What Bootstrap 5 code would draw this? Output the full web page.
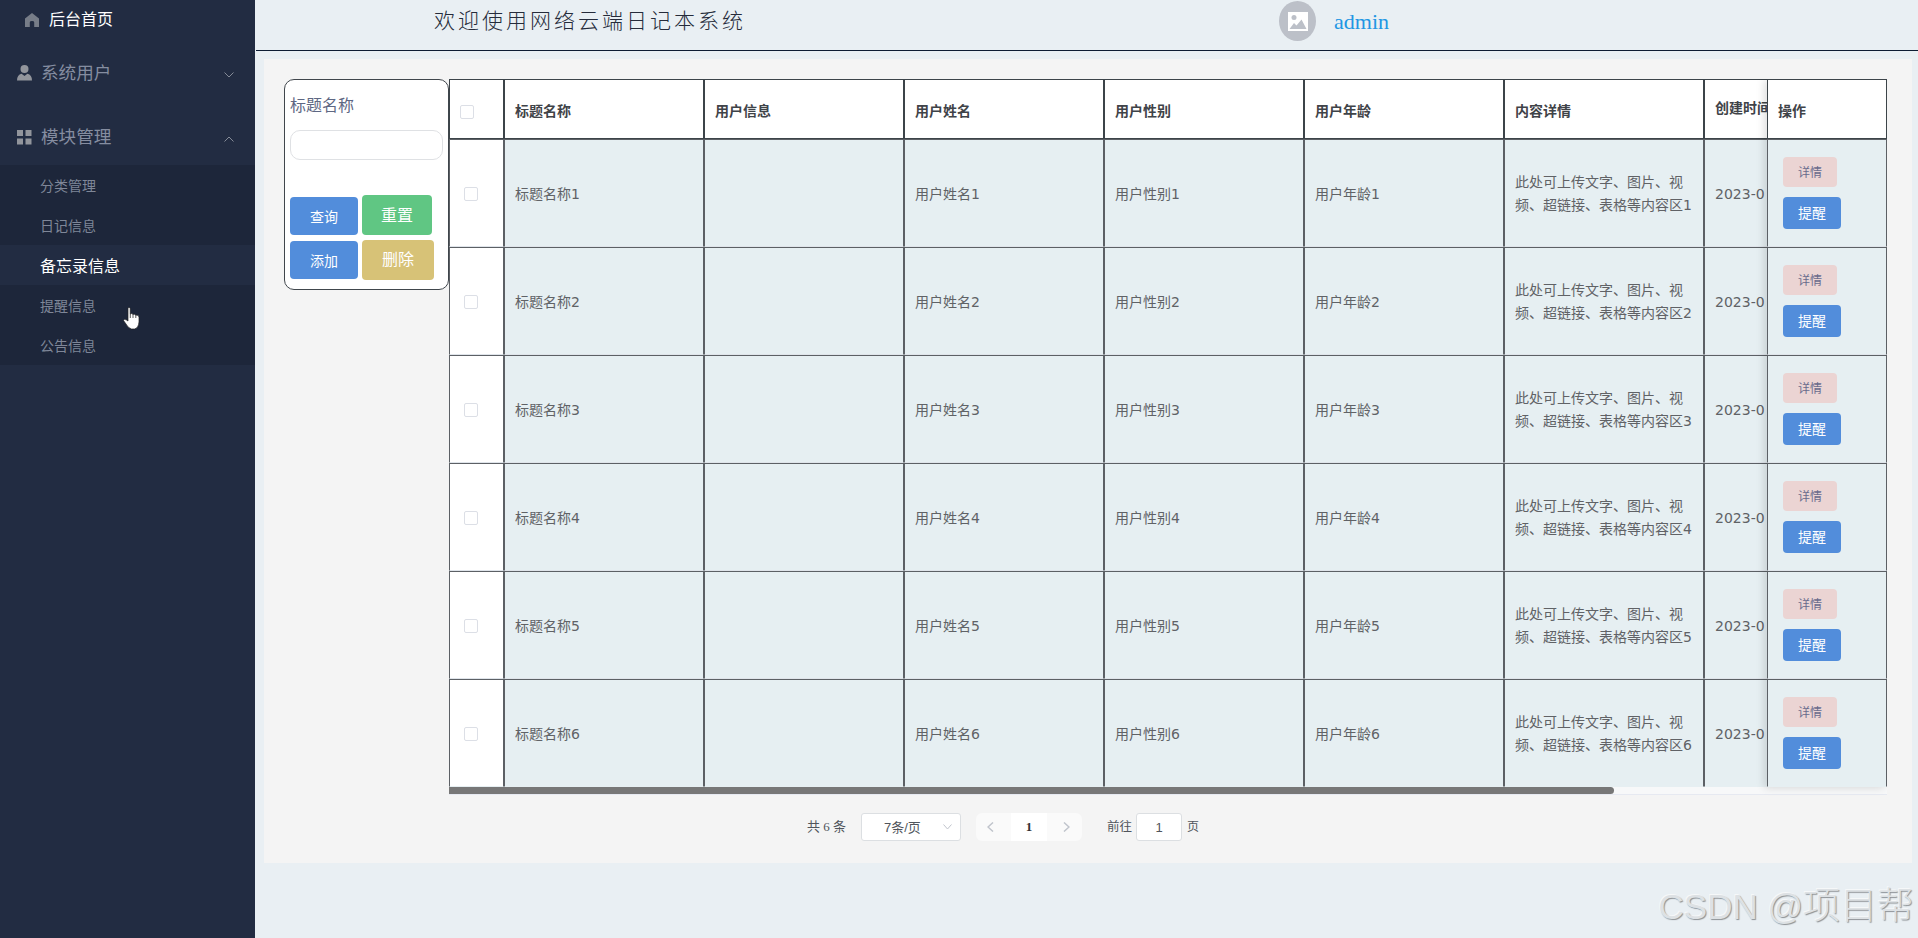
<!DOCTYPE html>
<html lang="zh-CN">
<head>
<meta charset="utf-8">
<title>网络云端日记本系统</title>
<link rel="stylesheet" href="https://cdn.jsdelivr.net/npm/bootstrap@5.3.0/dist/css/bootstrap.min.css">
<script src="https://cdn.jsdelivr.net/npm/bootstrap@5.3.0/dist/js/bootstrap.bundle.min.js"></script>
<style>
body{font-family:"DejaVu Sans","Noto Sans CJK SC",sans-serif;background:#e9eff3;height:938px;font-size:14px;color:#606266}
.side{width:255px;background:#222c42;color:#858da0;flex:none}
.side a{color:inherit;text-decoration:none;white-space:nowrap;display:flex;align-items:center}
.home-link{height:40px;padding-left:25px;gap:10px;font-size:16px;color:#fff!important}
.group{height:64px;font-size:17.6px;padding:2px 21px 0 17px}
.group svg:first-child{margin-right:9px}
.group svg:last-child{margin-top:4px}
.submenu{background:#1d263a;margin-top:-3px}
.submenu a{height:40px;padding:2px 0 0 40px;font-size:14px;color:#7f8798}
.submenu a.current{background:#222c42;color:#fff;font-size:16px;padding-top:4px}
.topbar{height:51px;border-bottom:1px solid #0d1c33;margin-left:1px}
.sys-title{margin-left:178px;width:845px;font-size:21px;letter-spacing:3px;font-weight:300;color:#252b3a;line-height:43px;height:46px;white-space:nowrap}
.avatar{width:37px;height:40px;border-radius:50%;background:#bcc0c8;margin-top:1px}
.user{font:22px/42px "Liberation Serif",serif;color:#2196e3;margin-left:18px;margin-top:1px}
.panel{background:#f4f4f4;margin:8px 6px 0 9px;height:804px;padding:20px 25px 0 20px}
.search{width:165px;height:211px;background:#fff;border:1px solid #40464c;border-radius:10px;padding:0 5px;flex:none}
.search label{font-size:16px;line-height:52px;color:#5e6783;height:50px;display:block}
.search input{height:30px;min-height:30px;border:1px solid #dfe1e4;border-radius:10px;padding:0}
.btns{display:grid;grid-template-columns:68px 72px;column-gap:4px;margin-top:35px}
.btn{border:0;padding:0;border-radius:4px;line-height:1}
.b-blue,.b-blue:hover{background:#528ddb;color:#fff}
.b-green{background:#60c683;color:#fff;width:70px;height:40px;font-size:16px;padding-top:2px}
.b-gold{background:#d7c277;color:#fff;height:40px;font-size:16px;width:72px}
.search .b-blue{height:38px;font-size:14px;width:68px;padding-top:1px}
.grid-main{width:1318px;overflow:hidden;flex:none}
.grid{table-layout:fixed;border-collapse:separate;border-spacing:0;margin:0;width:1455px}
.grid th,.grid td{box-sizing:border-box;border:1px solid #5c6065;padding:0 10px;vertical-align:middle;white-space:nowrap}
.grid th{height:60px;border-color:#3c4449;background:#fff;color:#3f4348;font-weight:700;padding-top:5px}
.grid td{height:108px;background:#e6eff2;border-bottom-color:#dfe4ea;line-height:23px;color:#606266;padding-top:2px}
.grid td:first-child.ck{background:#fff;padding:2px 14px 0}
.grid tbody tr:last-child td{border-bottom-color:#e6eff2}
.grid .wrap-cell{white-space:normal;padding-right:0}
.box{display:block;width:14px;height:14px;border:1px solid #dcdfe6;border-radius:2px;background:#fff}
.grid-fixed{width:120px;flex:none;position:relative;box-shadow:-3px 1px 8px rgba(0,0,0,.13);clip-path:inset(0 0 -12px -12px)}
.grid-fixed .grid{width:120px}
.grid-fixed td{padding:0 0 0 15px!important}
.b-pink{width:54px;height:30px;background:#ebd4d3;color:#696b8c;font-size:12px;margin-bottom:10px;padding-top:2px}
.grid .b-blue{width:58px;height:32px;font-size:14px}
.ops{margin-top:-1px;height:72px}
.track{width:1438px;height:8px;border-bottom:1px solid #e6e9f1;background:#f7f8f9}
.thumb{width:1165px;height:7px;background:#777;border-radius:0 4px 4px 0}
.pager{height:28px;margin:18px 0 0 523px;font-size:12px;color:#50555c;font-family:"Liberation Serif","Noto Sans CJK SC",serif}
.pager .pv{height:28px;background:#fff;border:1px solid #dcdfe2;border-radius:3px;font:13px/27px "Liberation Sans","Noto Sans CJK SC",sans-serif}
.pg{width:35px;height:28px;background:#fafafa}
.mark-text{position:absolute;right:4px;bottom:3px;font:300 37px/56px "Liberation Sans","Noto Sans CJK SC",sans-serif;color:#dde1e4;text-shadow:1px 1px 1px #8d9296,-1px -1px 0 #f6f8f9;white-space:nowrap}
.mark-text span{font-size:35px}
.pointer{position:absolute;left:123px;top:307px}
</style>
</head>
<body class="d-flex overflow-hidden position-relative">
<nav class="side">
  <a class="home-link" href="#"><svg width="14" height="14" viewBox="0 0 14 14"><path fill="#777d88" d="M7 0 14 5.6V14H9.2V9.2Q9.2 8 7 8T4.8 9.2V14H0V5.6Z"/></svg>后台首页</a>
  <a class="group" href="#"><svg width="15" height="16" viewBox="0 0 15 16"><path fill="#92959c" d="M7.5 0a4 4 0 1 1 0 8 4 4 0 0 1 0-8ZM0 15.5Q0 9.7 4.6 8.7L7.5 11l2.9-2.3Q15 9.7 15 15.5Z"/></svg>系统用户<svg class="ms-auto" width="10" height="6" viewBox="0 0 10 6"><path fill="none" stroke="#858b97" d="M.5.5 5 5 9.500.5"/></svg></a>
  <a class="group" href="#"><svg width="15" height="15" viewBox="0 0 15 15"><path fill="#92959c" d="M0 0h6v6H0zM8.500 0h6v6h-6zM0 8.500h6v6H0zM8.500 8.500h6v6h-6z"/></svg>模块管理<svg class="ms-auto" width="10" height="6" viewBox="0 0 10 6"><path fill="none" stroke="#858b97" d="M.5 5.500 5 1l4.500 4.500"/></svg></a>
  <div class="submenu">
    <a href="#">分类管理</a><a href="#">日记信息</a><a href="#" class="current">备忘录信息</a><a href="#">提醒信息</a><a href="#">公告信息</a>
  </div>
</nav>
<main class="flex-grow-1">
  <header class="topbar d-flex align-items-start">
    <div class="sys-title">欢迎使用网络云端日记本系统</div>
    <div class="avatar d-flex align-items-center justify-content-center"><svg width="20" height="19" viewBox="0 0 20 19"><path fill="#fff" d="M0 0h20v19H0z"/><circle cx="6" cy="5.500" r="2.500" fill="#bcc0c8"/><path fill="#bcc0c8" d="M1.500 17 6 11l2.500 2.500 5-6L18.500 17Z"/></svg></div>
    <span class="user">admin</span>
  </header>
  <section class="panel">
    <div class="d-flex align-items-start">
      <form class="search">
        <label for="q">标题名称</label>
        <input id="q" class="form-control">
        <div class="btns">
          <div style="padding-top:2px"><button type="button" class="btn b-blue">查询</button></div>
          <button type="button" class="btn b-green">重置</button>
          <div style="padding-top:6px"><button type="button" class="btn b-blue">添加</button></div>
          <div style="padding-top:5px"><button type="button" class="btn b-gold">删除</button></div>
        </div>
      </form>
      <div>
        <div class="d-flex">
          <div class="grid-main">
            <table class="grid">
              <colgroup><col style="width:55px"><col span="7" style="width:200px"></colgroup>
              <thead><tr><th><span class="box"></span></th><th>标题名称</th><th>用户信息</th><th>用户姓名</th><th>用户性别</th><th>用户年龄</th><th>内容详情</th><th style="padding-bottom:3px;padding-top:2px">创建时间</th></tr></thead>
              <tbody id="rows"></tbody>
            </table>
          </div>
          <div class="grid-fixed">
            <table class="grid"><thead><tr><th>操作</th></tr></thead><tbody id="ops"></tbody></table>
          </div>
        </div>
        <div class="track"><div class="thumb"></div></div>
      </div>
    </div>
    <div class="pager d-flex align-items-center">
      <span style="width:54px;font-size:13px">共 6 条</span>
      <div class="pv d-flex align-items-center" style="width:100px;padding:0 8px 0 22px">7条/页<svg class="ms-auto" width="9" height="6" viewBox="0 0 9 6"><path fill="none" stroke="#c0c4cc" d="m.5.5 4 4.500 4-4.500"/></svg></div>
      <div class="pg d-flex align-items-center ps-2 rounded-start" style="margin-left:15px"><svg style="margin-left:3px" width="7" height="10" viewBox="0 0 7 10"><path fill="none" stroke="#c0c4cc" stroke-width="1.500" d="M6 .5 1 5l5 4.500"/></svg></div>
      <div class="bg-white text-center fw-bold" style="width:36px;height:28px;line-height:28px;font-size:13px;color:#303133">1</div>
      <div class="pg d-flex align-items-center justify-content-center rounded-end"><svg style="margin-left:3px" width="7" height="10" viewBox="0 0 7 10"><path fill="none" stroke="#c0c4cc" stroke-width="1.500" d="m1 .5 5 4.500-5 4.500"/></svg></div>
      <span style="margin-left:25px;width:29px;font-size:12.500px">前往</span>
      <div class="pv text-center" style="width:46px">1</div>
      <span style="margin-left:5px">页</span>
    </div>
  </section>
</main>
<svg class="pointer" width="18" height="23" viewBox="0 0 18 23"><path fill="#fff" stroke="#222" stroke-width=".7" d="M5 1.500Q5 .4 6 .4T7.200 1.500V7Q9 5.800 10 7.500 11.500 6.500 12.700 8.200 15.500 7.500 16 10v5Q15.500 21 11.500 22H8.500Q5 21 3 17L.5 13.500Q1.500 11.500 3.500 13L5 14Z"/><path stroke="#333" stroke-width=".8" d="M7.300 7v4M10 7.500V11M12.800 8.300V11"/></svg>
<div class="mark-text"><span>CSDN @</span>项目帮</div>
<script>
var left = '', right = '';
for (var i = 1; i <= 6; i++) {
  left += '<tr><td class="ck"><span class="box"></span></td><td>标题名称' + i + '</td><td></td><td>用户姓名' + i +
    '</td><td>用户性别' + i + '</td><td>用户年龄' + i + '</td><td class="wrap-cell">此处可上传文字、图片、视<br>频、超链接、表格等内容区' + i +
    '</td><td>2023-0</td></tr>';
  right += '<tr><td><div class="ops d-flex flex-column align-items-start"><button class="btn b-pink">详情</button><button class="btn b-blue">提醒</button></div></td></tr>';
}
document.getElementById('rows').innerHTML = left;
document.getElementById('ops').innerHTML = right;
</script>
</body>
</html>
